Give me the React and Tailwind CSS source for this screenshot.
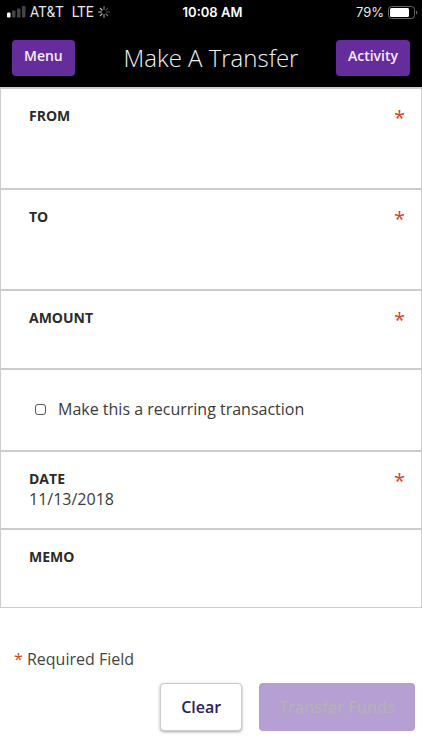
import { useState } from "react";

const sans = "font-['Open_Sans','Noto_Sans',sans-serif]";

function Asterisk() {
  return (
    <span aria-hidden="true" className="pt-0.5 text-xl leading-5 font-medium text-[#dd3d22]">
      *
    </span>
  );
}

function Field({ id, label, required, size, children }) {
  return (
    <div className={`${size} border-t-2 border-[#cccccc] pr-4 pl-7 pt-[17px]`}>
      <div className="flex h-5 items-start justify-between">
        <label htmlFor={id} className="text-sm leading-5 font-bold text-[#2b2b2b]">
          {label}
        </label>
        {required && <Asterisk />}
      </div>
      {children}
    </div>
  );
}

function StatusBar() {
  return (
    <div className="grid h-6 grid-cols-3 items-center pr-1 pl-[7px] font-['Inter','Liberation_Sans',sans-serif] text-[13px] leading-4 text-[#e8e8e8]">
      <div className="flex items-center font-['Roboto','Liberation_Sans',sans-serif] text-sm leading-4">
        <svg width="19" height="12" viewBox="0 0 19 12" aria-hidden="true">
          <rect x="0" y="6.5" width="3.5" height="5" rx="1" fill="#fff" />
          <rect x="5" y="4.5" width="3.5" height="7" rx="1" fill="#444" />
          <rect x="10" y="2.5" width="3.5" height="9" rx="1" fill="#444" />
          <rect x="15" y="0" width="3.5" height="11.5" rx="1" fill="#444" />
        </svg>
        <span className="ml-1">AT&amp;T</span>
        <span className="ml-2">LTE</span>
        <svg className="ml-1" width="12" height="12" viewBox="0 0 12 12" strokeWidth="1.2" strokeLinecap="round" aria-hidden="true">
          <path d="M6 .7v2.6" stroke="#777" />
          <path d="M9.7 2.3 8 4" stroke="#444" />
          <path d="M11.3 6H8.7" stroke="#555" />
          <path d="M9.7 9.7 8 8" stroke="#777" />
          <path d="M6 11.3V8.7" stroke="#999" />
          <path d="M2.3 9.7 4 8" stroke="#bbb" />
          <path d="M.7 6h2.6" stroke="#ddd" />
          <path d="M2.3 2.3 4 4" stroke="#ccc" />
        </svg>
      </div>
      <span className="text-center font-semibold text-white">10:08 AM</span>
      <div className="flex items-center justify-end gap-1">
        <span>79%</span>
        <svg width="30" height="13" viewBox="0 0 30 13" aria-hidden="true">
          <rect x="0.5" y="0.5" width="26" height="12" rx="3" fill="none" stroke="#666" />
          <rect x="2" y="2" width="19" height="9" rx="1.5" fill="#fff" />
          <path d="M28 4.5a2.2 2.2 0 0 1 0 4z" fill="#666" />
        </svg>
      </div>
    </div>
  );
}

export default function App() {
  const [recurring, setRecurring] = useState(false);
  const input = "block w-full bg-transparent text-base leading-5 text-[#3a3a3a] outline-none";
  const navButton = "h-9 rounded bg-[#652d9b] px-3 pb-1 text-sm font-semibold text-[#f4ecfb]";

  return (
    <div className={`${sans} bg-white pb-4`}>
      <header className="bg-black">
        <StatusBar />
        <div className="grid h-[63px] grid-cols-[1fr_auto_1fr] items-center px-3 pt-2 pb-1">
          <button type="button" className={`${navButton} justify-self-start`}>Menu</button>
          <h1 className="text-2xl leading-8 font-light text-[#f2f2f2]">Make A Transfer</h1>
          <button type="button" className={`${navButton} justify-self-end`}>Activity</button>
        </div>
      </header>

      <form onSubmit={(e) => e.preventDefault()}>
        <div className="border-x border-b border-[#cccccc]">
          <Field id="from" label="FROM" required size="h-[101px]">
            <select id="from" className={`${input} appearance-none`} />
          </Field>
          <Field id="to" label="TO" required size="h-[101px]">
            <select id="to" className={`${input} appearance-none`} />
          </Field>
          <Field id="amount" label="AMOUNT" required size="h-[79px]">
            <input id="amount" type="text" inputMode="decimal" className={input} />
          </Field>
          <div className="flex h-[82px] items-center border-t-2 border-[#cccccc] pb-0.5 pl-[34px]">
            <input
              id="recurring"
              type="checkbox"
              checked={recurring}
              onChange={(e) => setRecurring(e.target.checked)}
              className="size-[11px] appearance-none rounded-[3px] border border-[#555555] bg-white checked:bg-[#652d9b]"
            />
            <label htmlFor="recurring" className="pl-3 text-base leading-6 text-[#3a3a3a]">
              Make this a recurring transaction
            </label>
          </div>
          <Field id="date" label="DATE" required size="h-[78px]">
            <input id="date" type="text" defaultValue="11/13/2018" className={input} />
          </Field>
          <Field id="memo" label="MEMO" size="h-[79px]">
            <input id="memo" type="text" className={input} />
          </Field>
        </div>

        <p className="mt-[39px] px-3.5 text-base leading-6 text-[#444444]">
          <span className="text-[#dd3d22]">*</span> Required Field
        </p>
        <div className="mt-3 flex justify-end gap-[17px] pr-[7px]">
          <button
            type="button"
            className="h-12 rounded border border-[#cccccc] bg-white px-5 text-base font-semibold text-[#2e2060] shadow-[0_1px_3px_rgba(0,0,0,0.35)]"
          >
            Clear
          </button>
          <button
            type="submit"
            disabled
            className="h-12 rounded bg-[#b69fd2] px-5 text-base font-semibold text-[#b5b0b8]"
          >
            Transfer Funds
          </button>
        </div>
      </form>
    </div>
  );
}
